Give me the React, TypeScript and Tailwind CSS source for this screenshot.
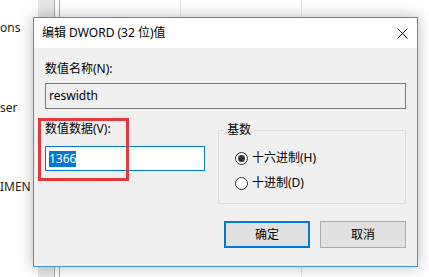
import React from 'react';

const font = { fontFamily: '"Segoe UI", "Noto Sans", "Noto Sans CJK SC", sans-serif' };

const Radio = ({ checked, label }: { checked?: boolean; label: string }) => (
  <div className="flex items-center h-[16px]">
    <span className="w-[13px] h-[13px] rounded-full border border-[#333333] bg-white flex items-center justify-center">
      {checked && <span className="w-[7px] h-[7px] rounded-full bg-[#333333]" />}
    </span>
    <span className="ml-[4px] text-[12px] leading-[16px] text-black">{label}</span>
  </div>
);

export default function App() {
  return (
    <div className="relative w-[429px] h-[277px] bg-white overflow-hidden" style={font}>
      {/* background window behind the dialog */}
      <div className="absolute left-[38px] top-0 w-[16px] h-full bg-[#e6e6e6]" />
      <div className="absolute left-[54px] top-0 w-px h-full bg-[#a8a8a8]" />
      <div className="absolute left-[59px] top-0 w-px h-full bg-[#a8a8a8]" />
      <div className="absolute left-[180px] top-0 w-px h-[20px] bg-[#e8e8e8]" />
      <div className="absolute left-[301px] top-0 w-px h-full bg-[#e8e8e8]" />
      <div className="absolute left-0 top-[20px] text-[12px] leading-[16px] text-[#222]">ons</div>
      <div className="absolute left-0 top-[100px] text-[12px] leading-[16px] text-[#222]">ser</div>
      <div className="absolute left-0 top-[179px] text-[12px] leading-[16px] text-[#222]">IMEN</div>

      {/* dialog */}
      <div className="absolute left-[33px] top-[17px] w-[385px] h-[250px] border border-[#4a8fd0] bg-[#f0f0f0] shadow-[0_0_14px_rgba(0,0,0,0.28)] flex flex-col">
        <div className="h-[30px] bg-white flex items-center justify-between pl-[8px] pr-[9px]">
          <span className="text-[12px] text-black">编辑 DWORD (32 位)值</span>
          <svg width="11" height="11" viewBox="0 0 11 11">
            <path d="M0.5 0.5 L10.5 10.5 M10.5 0.5 L0.5 10.5" stroke="#111" strokeWidth="1" />
          </svg>
        </div>

        <div className="px-[11px] pt-[13px] flex flex-col">
          <div className="text-[12px] leading-[16px] text-black">数值名称(N):</div>
          <div className="mt-[6px] h-[26px] border border-[#7a7a7a] bg-[#f0f0f0] flex items-center pl-[3px] text-[12px] text-black">
            reswidth
          </div>

          <div className="mt-[12px] flex">
            <div className="relative w-[160px] flex flex-col">
              <div className="text-[12px] leading-[16px] text-black">数值数据(V):</div>
              <div className="mt-[9px] h-[25px] border border-[#0078d7] bg-white flex items-center pl-[3px]">
                <span className="bg-[#0078d7] text-white text-[12px] leading-[16px]">1366</span>
              </div>
              <div className="absolute left-[-7px] top-[-3px] w-[91px] h-[63px] border-[3px] border-[#e5383b]" />
            </div>

            <div className="ml-[13px] mt-[9px] w-[188px] h-[74px] relative border border-[#dcdcdc]">
              <span className="absolute left-[5px] top-[-9px] px-[3px] bg-[#f0f0f0] text-[12px] leading-[16px] text-black">基数</span>
              <div className="pl-[16px] pt-[19px] flex flex-col gap-[9px]">
                <Radio checked label="十六进制(H)" />
                <Radio label="十进制(D)" />
              </div>
            </div>
          </div>

          <div className="mt-[17px] flex justify-end gap-[10px]">
            <button className="w-[86px] h-[27px] border-2 border-[#0078d7] bg-[#e1e1e1] text-[12px] text-black">确定</button>
            <button className="w-[86px] h-[27px] border border-[#adadad] bg-[#e1e1e1] text-[12px] text-black">取消</button>
          </div>
        </div>
      </div>
    </div>
  );
}
